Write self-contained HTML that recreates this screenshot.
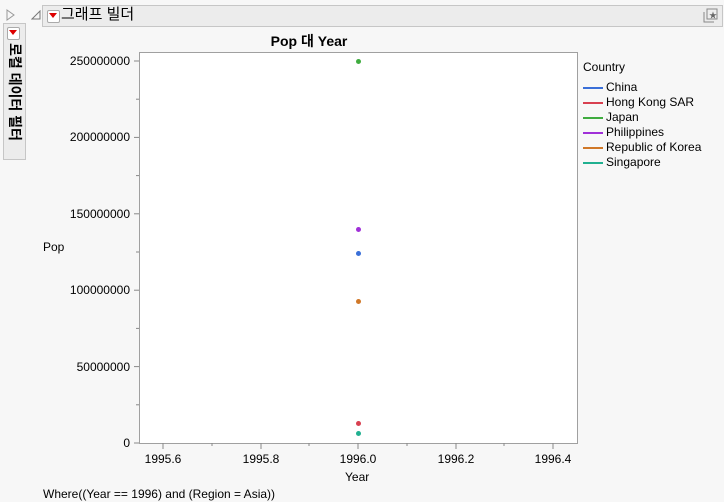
<!DOCTYPE html><html><head><meta charset="utf-8"><style>
body{margin:0;width:724px;height:502px;background:#f7f7f7;font-family:"Liberation Sans","Noto Sans CJK KR",sans-serif;position:relative;overflow:hidden;font-size:12px;color:#000}
.a{position:absolute}
.yl{position:absolute;right:594px;font-size:12px;line-height:14px}
.xl{position:absolute;top:452px;font-size:12px;width:60px;text-align:center}
.lg{position:absolute;left:583px;font-size:12px;line-height:15px}
.lg i{display:inline-block;width:20px;height:2px;vertical-align:middle;margin-right:3px}
.dot{position:absolute;width:5px;height:5px;border-radius:50%;left:356px}
</style></head><body>
<svg class="a" style="left:6px;top:9px" width="10" height="12"><path d="M1 1 L8 6 L1 11 Z" fill="none" stroke="#999"/></svg>
<svg class="a" style="left:31px;top:10px" width="10" height="10"><path d="M9 1 L9 9 L1 9 Z" fill="none" stroke="#777"/></svg>
<div class="a" style="left:42px;top:5px;width:679px;height:20px;background:#ececec;border:1px solid #c6c6c6"></div>
<div class="a" style="left:47px;top:10px;width:11px;height:11px;border:1px solid #aaa;background:#fff;border-radius:2px"></div>
<svg class="a" style="left:49px;top:13px" width="9" height="6"><path d="M0 0 L8 0 L4 5Z" fill="#d00"/></svg>
<div class="a" style="left:61px;top:5px;font-size:15px;line-height:20px">그래프 빌더</div>
<svg class="a" style="left:703px;top:8px" width="15" height="15"><rect x="4" y="1" width="10" height="10" fill="#eee" stroke="#888"/><path d="M1 4 V14 H11" fill="none" stroke="#888"/><text x="6" y="10" font-size="8" fill="#666">★</text></svg>
<div class="a" style="left:3px;top:23px;width:21px;height:135px;background:#ececec;border:1px solid #c6c6c6"></div>
<div class="a" style="left:7px;top:27px;width:11px;height:11px;border:1px solid #aaa;background:#fff;border-radius:2px"></div>
<svg class="a" style="left:9px;top:30px" width="9" height="6"><path d="M0 0 L8 0 L4 5Z" fill="#d00"/></svg>
<div class="a" style="left:24px;top:43px;transform-origin:0 0;transform:rotate(90deg);font-size:14px;font-weight:bold;line-height:19px;white-space:nowrap">로컬 데이터 필터</div>
<div class="a" style="left:139px;top:31px;width:340px;text-align:center;font-weight:bold;font-size:14px">Pop 대 Year</div>
<div class="a" style="left:139px;top:52px;width:437px;height:390px;background:#fff;border:1px solid #a0a0a0"></div>
<svg class="a" style="left:128px;top:50px" width="12" height="400">
<g stroke="#888">
<line x1="6" y1="11" x2="11" y2="11"/><line x1="6" y1="87.4" x2="11" y2="87.4"/><line x1="6" y1="163.8" x2="11" y2="163.8"/><line x1="6" y1="240.2" x2="11" y2="240.2"/><line x1="6" y1="316.6" x2="11" y2="316.6"/><line x1="6" y1="393" x2="11" y2="393"/>
<line x1="8" y1="49.2" x2="11" y2="49.2"/><line x1="8" y1="125.6" x2="11" y2="125.6"/><line x1="8" y1="202" x2="11" y2="202"/><line x1="8" y1="278.4" x2="11" y2="278.4"/><line x1="8" y1="354.8" x2="11" y2="354.8"/></g></svg>
<svg class="a" style="left:139px;top:443px" width="440" height="8"><g stroke="#888">
<line x1="24" y1="0" x2="24" y2="6"/><line x1="122" y1="0" x2="122" y2="6"/><line x1="219" y1="0" x2="219" y2="6"/><line x1="317" y1="0" x2="317" y2="6"/><line x1="414" y1="0" x2="414" y2="6"/>
<line x1="73" y1="0" x2="73" y2="3"/><line x1="170" y1="0" x2="170" y2="3"/><line x1="268" y1="0" x2="268" y2="3"/><line x1="365" y1="0" x2="365" y2="3"/></g></svg>
<div class="yl" style="top:54px">250000000</div>
<div class="yl" style="top:130px">200000000</div>
<div class="yl" style="top:207px">150000000</div>
<div class="yl" style="top:283px">100000000</div>
<div class="yl" style="top:360px">50000000</div>
<div class="yl" style="top:436px">0</div>
<div class="a" style="left:43px;top:240px">Pop</div>
<div class="xl" style="left:133px">1995.6</div>
<div class="xl" style="left:231px">1995.8</div>
<div class="xl" style="left:328px">1996.0</div>
<div class="xl" style="left:426px">1996.2</div>
<div class="xl" style="left:523px">1996.4</div>
<div class="a" style="left:345px;top:470px">Year</div>
<div class="a" style="left:43px;top:487px">Where((Year == 1996) and (Region = Asia))</div>
<div class="dot" style="top:59px;background:#3fac3f"></div>
<div class="dot" style="top:227px;background:#a030d8"></div>
<div class="dot" style="top:251px;background:#3a6fd8"></div>
<div class="dot" style="top:299px;background:#d07828"></div>
<div class="dot" style="top:421px;background:#d84050"></div>
<div class="dot" style="top:431px;background:#20b090"></div>
<div class="lg" style="top:60px">Country</div>
<div class="lg" style="top:80px"><i style="background:#3a6fd8"></i>China</div>
<div class="lg" style="top:95px"><i style="background:#d84050"></i>Hong Kong SAR</div>
<div class="lg" style="top:110px"><i style="background:#3fac3f"></i>Japan</div>
<div class="lg" style="top:125px"><i style="background:#a030d8"></i>Philippines</div>
<div class="lg" style="top:140px"><i style="background:#d07828"></i>Republic of Korea</div>
<div class="lg" style="top:155px"><i style="background:#20b090"></i>Singapore</div>
</body></html>
